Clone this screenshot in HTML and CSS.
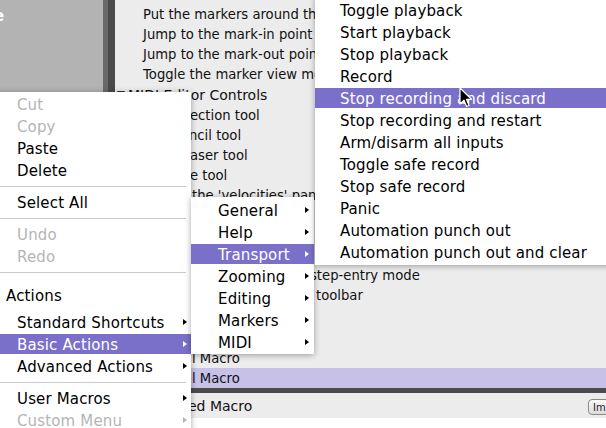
FILE: index.html
```html
<!DOCTYPE html>
<html>
<head>
<meta charset="utf-8">
<link rel="stylesheet" href="styles.css">
</head>
<body>
<div class="app">
  <aside class="side"><div class="side-title">e</div></aside>
  <div class="divider"><span class="d1"></span><span class="d2"></span></div>
  <main class="panel">
    <div class="list">
      <div class="row clip">Put the markers around the selection</div>
      <div class="row">Jump to the mark-in point</div>
      <div class="row">Jump to the mark-out point</div>
      <div class="row clip">Toggle the marker view mode</div>
      <div class="group"><span class="tri"></span>MIDI Editor Controls</div>
      <div class="row cut">ection tool</div>
      <div class="row cut cut-n">ncil tool</div>
      <div class="row cut">aser tool</div>
      <div class="row cut">e tool</div>
      <div class="row cut-v">the 'velocities' panel</div>
      <div class="row"></div>
      <div class="row"></div>
      <div class="row"></div>
      <div class="row cut-s">step-entry mode</div>
      <div class="row cut-t">toolbar</div>
    </div>
    <div class="macros">
      <div class="row mac">l Macro</div>
      <div class="row mac sel">l Macro</div>
    </div>
    <div class="bar"></div>
    <div class="foot"><span class="foot-text">ed Macro</span><button class="btn">Im</button></div>
    <div class="blank"></div>
  </main>
</div>

<div class="menu menu-main">
  <div class="mi dis">Cut</div>
  <div class="mi dis">Copy</div>
  <div class="mi">Paste</div>
  <div class="mi">Delete</div>
  <div class="sep"></div>
  <div class="mi">Select All</div>
  <div class="sep"></div>
  <div class="mi dis">Undo</div>
  <div class="mi dis">Redo</div>
  <div class="sep"></div>
  <div class="mh">Actions</div>
  <div class="mi sub">Standard Shortcuts</div>
  <div class="mi sub hl">Basic Actions</div>
  <div class="mi sub">Advanced Actions</div>
  <div class="sep"></div>
  <div class="mi sub">User Macros</div>
  <div class="mi sub dis">Custom Menu</div>
</div>

<div class="menu menu-cat">
  <div class="mi sub">General</div>
  <div class="mi sub">Help</div>
  <div class="mi sub hl">Transport</div>
  <div class="mi sub">Zooming</div>
  <div class="mi sub">Editing</div>
  <div class="mi sub">Markers</div>
  <div class="mi sub">MIDI</div>
</div>

<div class="menu menu-trans">
  <div class="mi">Toggle playback</div>
  <div class="mi">Start playback</div>
  <div class="mi">Stop playback</div>
  <div class="mi">Record</div>
  <div class="mi hl">Stop recording and discard</div>
  <div class="mi">Stop recording and restart</div>
  <div class="mi">Arm/disarm all inputs</div>
  <div class="mi">Toggle safe record</div>
  <div class="mi">Stop safe record</div>
  <div class="mi">Panic</div>
  <div class="mi">Automation punch out</div>
  <div class="mi">Automation punch out and clear</div>
</div>

<svg class="cursor" width="14" height="22" viewBox="0 0 14 22">
  <path d="M1 1 L1 17 L5 13.2 L7.6 19.5 L10 18.5 L7.5 12.3 L12.5 12.3 Z" fill="#000" stroke="#fff" stroke-width="1.2" stroke-linejoin="round"/>
</svg>
</body>
</html>
```

FILE: styles.css
```css
html, body {
  margin: 0;
  padding: 0;
}
body {
  width: 606px;
  height: 428px;
  overflow: hidden;
  position: relative;
  font-family: "DejaVu Sans", sans-serif;
  background: #ffffff;
  color: #111;
}
.app {
  display: flex;
  height: 428px;
}
.side {
  width: 103px;
  background: #b3b3b3;
  flex: none;
}
.side-title {
  color: #fff;
  font-weight: bold;
  font-size: 15px;
  line-height: 20px;
  padding-top: 6px;
  text-indent: -6px;
  overflow: hidden;
  white-space: nowrap;
}
.divider {
  display: flex;
  flex: none;
}
.d1 {
  width: 5px;
  background: #6a6a6a;
}
.d2 {
  width: 7px;
  background: #4a4a4a;
}
.panel {
  flex: 1;
  display: flex;
  flex-direction: column;
  background: #ececec;
  overflow: hidden;
}
.list {
  padding-top: 4px;
}
.row {
  height: 20px;
  line-height: 22px;
  font-size: 13.2px;
  padding-left: 28px;
  white-space: nowrap;
}
.clip {
  width: 172px;
  overflow: hidden;
}
.group {
  height: 21px;
  line-height: 22px;
  font-size: 14px;
  padding-left: 2px;
  white-space: nowrap;
}
.tri {
  display: inline-block;
  width: 0;
  height: 0;
  border-top: 7px solid #333;
  border-left: 4.5px solid transparent;
  border-right: 4.5px solid transparent;
  margin-right: 3px;
  vertical-align: 2px;
}
.cut { padding-left: 75px; }
.cut-n { padding-left: 74px; }
.cut-v { padding-left: 77px; }
.cut-s { padding-left: 195px; }
.cut-t { padding-left: 201px; }
.macros {
  margin-top: 43px;
}
.mac {
  padding-left: 77px;
}
.sel {
  background: #c7c0e7;
}
.bar {
  height: 5px;
  background: #4b4b4b;
}
.foot {
  height: 25px;
  display: flex;
  align-items: center;
  font-size: 14px;
  padding-left: 73px;
  white-space: nowrap;
}
.foot-text {
  flex: 1;
}
.btn {
  margin-top: 3px;
  margin-right: -24px;
  width: 42px;
  height: 16px;
  padding: 0 0 0 4px;
  text-align: left;
  font-family: "DejaVu Sans", sans-serif;
  font-size: 10px;
  color: #222;
  border: 1px solid #8a8a8a;
  border-radius: 4px;
  background: linear-gradient(#fafafa, #dcdcdc);
}
.blank {
  height: 10px;
  background: #fff;
}

.menu {
  position: absolute;
  background: #fff;
  display: flex;
  flex-direction: column;
  font-size: 15px;
  letter-spacing: 0.15px;
  color: #000;
  box-shadow: 0 1px 6px rgba(0, 0, 0, 0.35);
}
.mi {
  position: relative;
  height: 20px;
  line-height: 22px;
  margin: 1px 0;
  white-space: nowrap;
  flex: none;
}
.mi.dis { color: #b5b5b5; }
.mi.hl {
  background: #7b70c9;
  color: #fff;
}
.mi.sub::after {
  content: "";
  position: absolute;
  top: 7px;
  width: 0;
  height: 0;
  border-left: 4px solid currentColor;
  border-top: 3.5px solid transparent;
  border-bottom: 3.5px solid transparent;
}
.sep {
  height: 1px;
  background: #cacaca;
  margin: 5px 5px 4px 0;
  flex: none;
}
.mh {
  height: 20px;
  line-height: 22px;
  padding: 8px 0 6px 11px;
  flex: none;
}

.menu-main {
  left: -5px;
  top: 92px;
  width: 196px;
  height: 350px;
  padding-top: 1px;
}
.menu-main .mi { padding-left: 22px; }
.menu-main .mi.sub::after { right: 4px; }

.menu-cat {
  left: 191px;
  top: 197px;
  width: 123px;
  padding: 2px 0 1px;
}
.menu-cat .mi { padding-left: 27px; }
.menu-cat .mi.sub::after { right: 5px; }

.menu-trans {
  left: 315px;
  top: -3px;
  width: 320px;
  padding: 2px 0 2px;
}
.menu-trans .mi { padding-left: 25px; }

.cursor {
  position: absolute;
  left: 459px;
  top: 87px;
}
```
